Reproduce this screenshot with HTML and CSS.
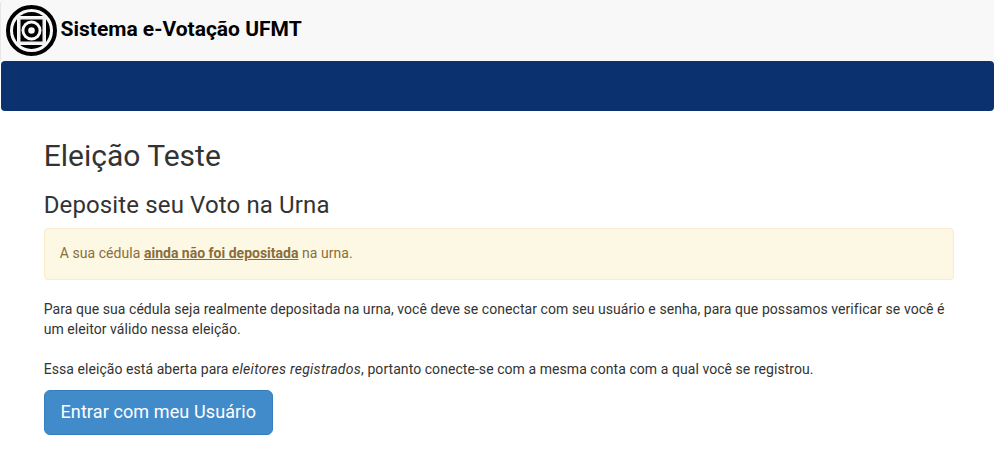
FILE: index.html
```html
<!DOCTYPE html>
<html lang="pt-BR">
<head>
<meta charset="utf-8">
<title>Sistema e-Votação UFMT</title>
<link rel="stylesheet" href="styles.css">
</head>
<body>
<header class="brand">
<svg class="logo" viewBox="0 0 51 51" aria-hidden="true">
<circle cx="25.5" cy="25.5" r="23.5" fill="#f8f8f8" stroke="#000" stroke-width="4"/>
<circle cx="25.5" cy="25.5" r="18.5"/>
<path fill="#f8f8f8" d="M11 11h29v29H11z"/>
<path fill="none" stroke="#ddd" stroke-width=".5" d="M13.2 11v29M37.8 11v29M11 13.2h29M11 37.8h29"/>
<path d="M14.5 14.5h22v22h-22z"/>
<circle cx="25.5" cy="25.5" r="10" fill="#f8f8f8"/>
<circle cx="25.5" cy="25.5" r="5.2" fill="none" stroke="#000" stroke-width="3.8"/>
</svg>
<span class="brand-name">Sistema e-Votação UFMT</span>
</header>
<nav class="navbar"></nav>
<main class="content">
<h2 class="title">Eleição Teste</h2>
<h3 class="subtitle">Deposite seu Voto na Urna</h3>
<div class="alert">A sua cédula <strong class="status">ainda não foi depositada</strong> na urna.</div>
<p class="text">Para que sua cédula seja realmente depositada na urna, você deve se conectar com seu usuário e senha, para que possamos verificar se você é um eleitor válido nessa eleição.</p>
<p class="text">Essa eleição está aberta para <em class="voters">eleitores registrados</em>, portanto conecte-se com a mesma conta com a qual você se registrou.</p>
<a class="button">Entrar com meu Usuário</a>
</main>
</body>
</html>
```
FILE: styles.css
```css
* { box-sizing: border-box; }
body { margin: 0; background: #fff; color: #333; font: 14px/20px Roboto, sans-serif; overflow: hidden; }
.brand { display: flex; align-items: flex-start; height: 61px; padding: 5px 0 0 5px; border-left: 1px solid #e7e7e7; border-top-left-radius: 4px; background: #f8f8f8; }
.logo { width: 51px; height: 51px; }
.brand-name { margin: 14px 0 0 3.5px; color: #000; font-size: 21px; font-weight: 700; }
.navbar { height: 50px; margin-left: 1px; background: #0b326f; border-radius: 4px; }
.content { padding: 28px 40px 0 43.7px; }
.title { margin: 0; font-size: 30px; font-weight: 400; line-height: 33px; }
.subtitle { margin: 20px 0 10px; font-size: 24px; font-weight: 400; line-height: 26px; letter-spacing: .13px; }
.alert { height: 52px; padding: 14px 15px; border: 1px solid #faebcc; border-radius: 4px; background: #fcf8e3; color: #8a6d3b; letter-spacing: .06px; }
.status { text-decoration: underline; letter-spacing: 0; }
.text { margin: 19px 0 0; letter-spacing: .06px; }
.text + .text { margin-top: 20px; }
.voters { letter-spacing: .27px; }
.button { display: inline-block; height: 45px; margin-top: 11px; padding: 9px 15.8px; border: 1px solid #357ebd; border-radius: 6px; background: #428bca; color: #fff; font-size: 18px; line-height: 24px; letter-spacing: .11px; }
```
